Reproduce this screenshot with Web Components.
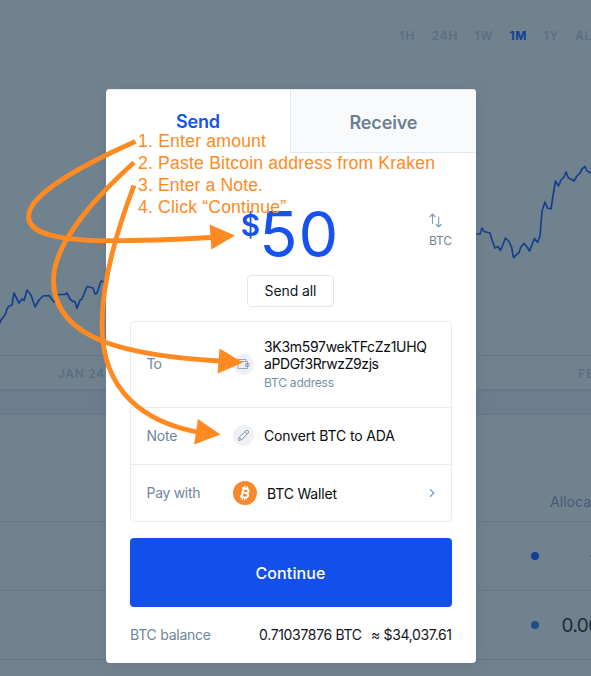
<!DOCTYPE html>
<html lang="en"><head><meta charset="utf-8"><title>Send BTC</title>
<style>
html,body{margin:0;width:591px;height:676px;overflow:hidden;background:#71828f;font-family:Inter,"Liberation Sans",sans-serif}
</style></head><body>
<wallet-app></wallet-app>
<script>
// Inline label whose tracking is set so that the text spans the width in `w`.
customElements.define('fit-label', class extends HTMLElement{
  connectedCallback(){
    const r=this.attachShadow({mode:'open'});
    r.innerHTML='<style>:host{display:inline-block;white-space:nowrap}span{display:inline-block}</style><span><slot></slot></span>';
    const w=+this.getAttribute('w'), s=r.querySelector('span');
    const n=this.textContent.length, nat=s.getBoundingClientRect().width;
    if(w&&n>1){const ls=(w-nat)/(n-1);s.style.letterSpacing=ls+'px';s.style.marginRight=(-ls)+'px';}
  }
});
const define=(name,html)=>customElements.define(name,class extends HTMLElement{
  connectedCallback(){ if(!this.shadowRoot) this.attachShadow({mode:'open'}).innerHTML=html; }
});

define('price-chart',`<style>
:host{display:block;height:389px;box-sizing:border-box}
nav{height:72px;display:flex;align-items:center;padding:0 0 2px 399px;box-sizing:border-box;gap:17px;font-size:12px;font-weight:600;color:#5b6f83;white-space:nowrap}
nav .on{color:#133f92;font-weight:700}
svg{display:block;width:591px;height:283px}
footer{height:34px;box-sizing:border-box;border-top:1px solid #677888;display:flex;align-items:center;justify-content:space-between;padding:2px 0 0 58px;font-size:12px;font-weight:600;color:#5b6f83}
.feb{width:13px;overflow:hidden;white-space:nowrap;letter-spacing:1.2px}
</style>
<nav><fit-label w="15.5">1H</fit-label><fit-label w="26">24H</fit-label><fit-label w="18">1W</fit-label><fit-label class="on" w="17">1M</fit-label><fit-label w="14.5">1Y</fit-label><fit-label w="24">ALL</fit-label></nav>
<svg viewBox="0 72 591 283" fill="none" stroke="#153f8f" stroke-width="1.7" stroke-linejoin="round">
<path d="M-1 325L1 320L5 315L7 309L9 306L12 305L14 293L19 303L22 299L24 300.500L27 290L31 295L35 307L39 300L43 296L49 295.500L54 302L58 294.500L65 294.500L67 293L70 299L73 301.500L75 301.500L77 308.500L80 300L82 299L87 286.500L93 288L95 294L97 293L101 281L108 283"/>
<path d="M470 234H480L482 228L484 231.500L490 233L492 240L495 248L498 246.500L500.500 250.500L505.500 238L509 241.500L511.500 247L513.500 257.500L519 252.500L521 247L524 243.500L527 247L529.500 251L534.500 238.500L537.500 242.500L540 236L542 211L545 202L547.500 208L551 209L553 196L555.500 181L558.500 186L561 180L564 177L566 172L568.500 178L571 179L574 181L577 176L580 173L582 169L585 166.500L587 171L592 173.500"/>
</svg>
<footer><fit-label w="46">JAN 24</fit-label><span class="feb">FEB</span></footer>`);

define('asset-table',`<style>
:host{display:block;margin-top:25px;border-top:1px solid #677888;height:261px;background:#71828f}
.r{box-sizing:border-box;border-bottom:1px solid #677888;height:69px;display:flex;align-items:center;padding-left:531px;overflow:hidden;white-space:nowrap}
.h{height:107px;align-items:flex-end;padding:0 0 11px 550px;font-size:14px;color:#435b75}
i{flex:none;width:8px;height:8px;border-radius:50%;background:#133f92}
i.b{background:#1b4f86}
span{font-size:19px;color:#17293e;padding-left:22.500px;letter-spacing:-.6px}
b{margin-left:51px;width:8px;height:1.500px;background:#5b6f83}
</style><div class="r h"><fit-label w="66">Allocation</fit-label></div><div class="r"><i></i><b></b></div><div class="r"><i class="b"></i><span>0.00</span></div>`);

define('page-backdrop',`<style>
:host{display:block;width:591px;height:676px;overflow:hidden;background:#71828f}
.band{display:flow-root;background:linear-gradient(#677888 1px,#6c7d8f 4px);height:287px}
</style><price-chart></price-chart><div class="band"><asset-table></asset-table></div>`);

define('tab-bar',`<style>
:host{display:grid;grid-template-columns:184px 1fr;height:64px;font-size:18px;font-weight:600}
div{display:flex;align-items:center;justify-content:center}
.a{color:#1652f0;border-top:1px solid #e6eaee}
.b{color:#6b8092;background:#f9fafc;border:1px solid #e2e7ed;border-right:0;padding-top:2px}
</style><div class="a"><fit-label w="44">Send</fit-label></div><div class="b"><fit-label w="68">Receive</fit-label></div>`);

define('amount-field',`<style>
:host{display:grid;grid-template-columns:1fr auto 1fr;height:122px;box-sizing:border-box;padding:48px 24px 0;align-items:start}
.amt{grid-column:2;display:flex;color:#1652f0;align-items:flex-start;margin-left:-2px}
.d{font-size:29.500px;line-height:34px;font-weight:600;padding-top:7px;width:18.500px;margin-left:-1px}
.n{font-size:63px;line-height:66px;font-weight:400}
.cur{justify-self:end;display:flex;flex-direction:column;align-items:flex-start;font-size:12px;line-height:14px;color:#708599;padding-top:12px;gap:6px}
svg{display:block}
</style><div class="amt"><span class="d">$</span><fit-label class="n" w="79">50</fit-label></div>
<div class="cur"><svg width="14" height="15" viewBox="0 0 14 15" fill="none" stroke="#7f9dbd" stroke-width="1.100"><path d="M3.500 11V1M.7 4L3.500 1L6.300 4M9.700 3.500V14M6.900 11L9.700 14L12.500 11"/></svg><fit-label w="23">BTC</fit-label></div>`);

define('outline-button',`<style>
:host{display:flex;align-items:center;justify-content:center;width:87px;height:32px;box-sizing:border-box;border:1px solid #e4e7ea;border-radius:4px;margin:0 0 0 141px;padding-bottom:1px;font-size:14px;color:#10161d}
</style><slot></slot>`);

define('detail-row',`<style>
:host{display:grid;grid-template-columns:86.500px 1fr auto;align-items:center;box-sizing:border-box;padding:0 15px 1px 15.500px;font-size:14px;color:#0a0b0d}
.l{color:#71859a;padding-bottom:1px}.v{display:flex;align-items:center;gap:10px}
</style><span class="l"><slot name="label"></slot></span><div class="v"><slot name="icon"></slot><slot></slot></div><slot name="end"></slot>`);

define('round-icon',`<style>
:host{display:flex;flex:none;width:21px;height:21px;border-radius:50%;background:#eef0f3;align-items:center;justify-content:center}
</style><slot></slot>`);

define('send-form',`<style>
:host{display:block;margin:14px 24px 0;border:1px solid #e9ebed;border-radius:4px;height:201px;box-sizing:border-box}
detail-row{height:57px;border-bottom:1px solid #e9ebed}
.to{height:86px}.pay{border:0}
.addr{display:flex;flex-direction:column;line-height:17px}
.addr small{font-size:12px;line-height:17px;color:#7890a3;margin-top:2px}
.addr{padding-top:1px}
svg{display:block}
</style>
<detail-row class="to"><fit-label slot="label" w="15.500">To</fit-label>
<round-icon slot="icon"><svg width="13" height="13" viewBox="0 0 13 13" fill="none" stroke="#8b9fb4" stroke-width=".9"><path d="M1 3.500H10.500V10.500H1V1.500H9V3.500M10.500 5.500H12V8.500H8.500V5.500H10.500M9.500 7H10.500"/></svg></round-icon>
<div class="addr"><fit-label w="163">3K3m597wekTFcZz1UHQ</fit-label><fit-label w="115">aPDGf3RrwzZ9zjs</fit-label><small><fit-label w="70">BTC address</fit-label></small></div></detail-row>
<detail-row><fit-label slot="label" w="31">Note</fit-label>
<round-icon slot="icon"><svg width="13" height="13" viewBox="0 0 13 13" fill="none" stroke="#71859c" stroke-width=".85" stroke-linejoin="round"><path d="M1.500 11.500L2.200 8.400L9 1.600Q10.200 .9 11.200 1.900Q12.100 2.900 11.300 4L4.600 10.800ZM8 2.700L10.300 5M2.200 8.400L4.600 10.800"/></svg></round-icon>
<fit-label w="131">Convert BTC to ADA</fit-label></detail-row>
<detail-row class="pay"><fit-label slot="label" w="54">Pay with</fit-label>
<svg slot="icon" width="24" height="24" viewBox="0 0 24 24"><circle cx="12" cy="12" r="12" fill="#f7882b"/><g transform="rotate(13 12 12)" fill="none" stroke="#fff"><path stroke-width="2" d="M9.500 7.600V16.400M8 7.600H12.700Q15 7.600 15 9.700Q15 11.800 12.700 11.800H9.500M12.700 11.800Q15.600 11.900 15.600 14.100Q15.600 16.400 12.900 16.400H8"/><path stroke-width="1.400" d="M10.500 5V7.500M13 5V7.500M10.500 16.500V19M13 16.500V19"/></g></svg>
<fit-label w="70">BTC Wallet</fit-label>
<svg slot="end" width="8" height="10" viewBox="0 0 8 10" fill="none" stroke="#7a9cc4" stroke-width="1.300"><path d="M2 1.200L5.800 5L2 8.800"/></svg></detail-row>`);

define('primary-button',`<style>
:host{display:flex;align-items:center;justify-content:center;height:69px;margin:16px 24px 0;border-radius:4px;background:#1350eb;color:#fff;font-size:16px;font-weight:500;box-sizing:border-box;padding:1px 1px 0 0}
</style><slot></slot>`);

define('balance-row',`<style>
:host{display:flex;height:55px;align-items:center;justify-content:space-between;padding:0 24px;font-size:14px;color:#10161d}
.l{color:#71859a}.v{display:flex;gap:9px}
</style><fit-label class="l" w="81">BTC balance</fit-label><span class="v"><fit-label w="103">0.71037876 BTC</fit-label><fit-label w="81">≈ $34,037.61</fit-label></span>`);

define('send-modal',`<style>
:host{display:block;width:370px;height:574px;background:#fff;border-radius:4px;overflow:hidden;box-shadow:0 2px 14px rgba(75,96,125,.28)}
</style><tab-bar></tab-bar><amount-field></amount-field><outline-button><fit-label w="52">Send all</fit-label></outline-button><send-form></send-form><primary-button><fit-label w="70">Continue</fit-label></primary-button><balance-row></balance-row>`);

define('note-overlay',`<style>
:host{display:block;color:#ff8a22;font:17.600px/22px "Liberation Sans",Arial,sans-serif}
svg{position:absolute;left:0;top:0}
.t{display:flex;flex-direction:column;align-items:flex-start;padding:130px 0 0 138px}
</style>
<svg width="591" height="676" viewBox="0 0 591 676"><g fill="none" stroke="#ff8a22" stroke-width="4.800">
<path d="M135.500 141.500C80 166 28 195 28.500 217C30 245 107 243 211 237.500"/>
<path d="M134 162.500C90 202 53.500 246 53.500 280C53.500 343 137 356 219 361"/>
<path d="M134 185.500C114 238 102 286 102 325C102 393 146 422 197 432"/></g>
<g fill="#ff8a22"><path d="M209.500 224.500L235 235.500L211.500 249.500Z"/><path d="M219.500 348.500L243 362.500L217.500 373.500Z"/><path d="M198 419L220.500 434.500L194 444.500Z"/></g></svg>
<div class="t"><fit-label w="128">1. Enter amount</fit-label><fit-label w="297">2. Paste Bitcoin address from Kraken</fit-label><fit-label w="125">3. Enter a Note.</fit-label><fit-label w="148">4. Click “Continue”</fit-label></div>`);

define('wallet-app',`<style>
:host{display:block;position:relative;width:591px;height:676px;overflow:hidden}
send-modal{position:absolute;left:106px;top:89px}
note-overlay{position:absolute;inset:0}
</style><page-backdrop></page-backdrop><send-modal></send-modal><note-overlay></note-overlay>`);
</script></body></html>
